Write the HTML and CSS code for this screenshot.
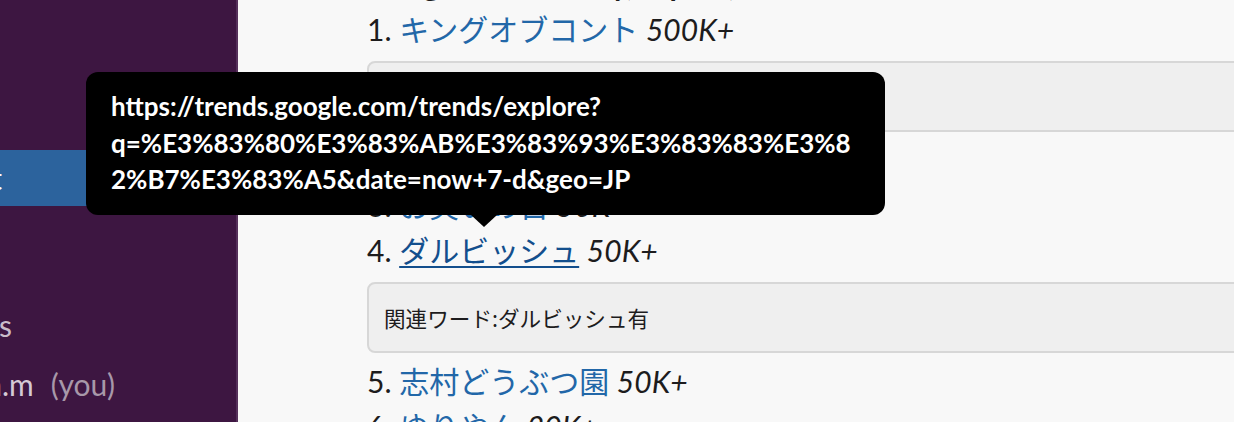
FILE: index.html
```html
<!DOCTYPE html>
<html lang="ja">
<head>
<meta charset="utf-8">
<title>Trends</title>
<link rel="stylesheet" href="styles.css">
</head>
<body>
<div class="app">
  <aside class="sidebar">
    <div class="sb-row"><span class="tail tail-none"># random</span></div>
    <div class="sb-row"><span class="tail tail-none"># general</span></div>
    <div class="sb-row active"><span class="tail tail-bot"># trend-bot</span></div>
    <div class="sb-row"><span class="tail tail-none"># times</span></div>
    <div class="sb-heading"><span class="tail tail-s">Direct messages</span></div>
    <div class="sb-row dm"><span class="tail tail-me">shun.m<span class="you">(you)</span></span></div>
  </aside>
  <main class="main">
    <div class="msg">
      <p class="msg-head">Google Trends daily, top 10, JP</p>
      <div class="trend"><span class="rank">1.</span> <a class="kw" href="#">キングオブコント</a> <em class="cnt">500K+</em></div>
      <div class="related">関連ワード:コント</div>
      <div class="trend"><span class="rank">2.</span> <a class="kw" href="#">半沢直樹</a> <em class="cnt">200K+</em></div>
      <div class="trend"><span class="rank">3.</span> <a class="kw" href="#">お笑いの日</a> <em class="cnt">50K+</em></div>
      <div class="trend"><span class="rank">4.</span> <a class="kw hover" href="#">ダルビッシュ</a> <em class="cnt">50K+</em></div>
      <div class="related">関連ワード:ダルビッシュ有</div>
      <div class="trend"><span class="rank">5.</span> <a class="kw" href="#">志村どうぶつ園</a> <em class="cnt">50K+</em></div>
      <div class="trend"><span class="rank">6.</span> <a class="kw" href="#">ゆりやん</a> <em class="cnt">20K+</em></div>
    </div>
  </main>
  <div class="tooltip">
    <span class="tip-line">https://trends.google.com/trends/explore?</span>
    <span class="tip-line">q=%E3%83%80%E3%83%AB%E3%83%93%E3%83%83%E3%8</span>
    <span class="tip-line">2%B7%E3%83%A5&amp;date=now+7-d&amp;geo=JP</span>
  </div>
</div>
</body>
</html>
```

FILE: styles.css
```css
html, body {
  margin: 0;
  padding: 0;
}
body {
  width: 1234px;
  height: 422px;
  overflow: hidden;
  font-family: Lato, "Noto Sans CJK JP", sans-serif;
  color: #1d1c1d;
  background: #f8f8f8;
}
.app {
  position: relative;
  display: flex;
  height: 422px;
  overflow: hidden;
}
.sidebar {
  flex: 0 0 236px;
  background: #3d1641;
  border-right: 2px solid #55305a;
  font-size: 30px;
  color: #d5cad6;
  padding-top: 38px;
  box-sizing: content-box;
}
.sb-row {
  height: 56px;
  display: flex;
  align-items: center;
}
.sb-row.active {
  background: #2c639d;
  color: #ffffff;
}
.sb-heading {
  height: 62px;
  margin-top: 32px;
  display: flex;
  align-items: center;
  color: #c9bcca;
}
.tail {
  display: flex;
  justify-content: flex-end;
  white-space: nowrap;
}
.tail-none { width: 0; overflow: visible; }
.tail-bot { width: 2px; }
.tail-s { width: 12px; }
.tail-me { width: 115px; }
.you {
  margin-left: 17px;
  color: #a898a9;
}
.main {
  flex: 1 1 auto;
  overflow: hidden;
  padding-left: 129px;
}
.msg {
  width: 960px;
  margin-top: -38px;
  font-size: 30px;
  line-height: 44px;
}
.msg-head {
  margin: 0;
  font-weight: 700;
}
.trend {
  white-space: nowrap;
}
.kw {
  color: #2267a8;
  text-decoration: none;
  font-family: "Noto Sans CJK JP", sans-serif;
  font-weight: 400;
}
.kw.hover {
  color: #134f8d;
  text-decoration: underline;
  text-underline-offset: 4px;
  text-decoration-thickness: 2px;
}
.cnt {
  font-style: italic;
}
.related {
  margin: 10px 0 5px;
  background: #efefef;
  border: 2px solid #d7d7d7;
  border-radius: 8px;
  padding: 16px 15px;
  font-family: "Noto Sans CJK JP", sans-serif;
  font-size: 21.6px;
  line-height: 35px;
}
.tooltip {
  position: absolute;
  left: 86px;
  top: 72px;
  width: 799px;
  height: 143px;
  box-sizing: border-box;
  padding: 16px 25px 15px;
  background: #000;
  border-radius: 12px;
  color: #fff;
  font-family: Lato, sans-serif;
  font-weight: 700;
  font-size: 26px;
  line-height: 36.5px;
}
.tooltip::after {
  content: "";
  position: absolute;
  left: 385px;
  bottom: -12px;
  border-top: 12px solid #000;
  border-left: 13px solid transparent;
  border-right: 13px solid transparent;
}
.tip-line {
  display: block;
  white-space: nowrap;
}
```
